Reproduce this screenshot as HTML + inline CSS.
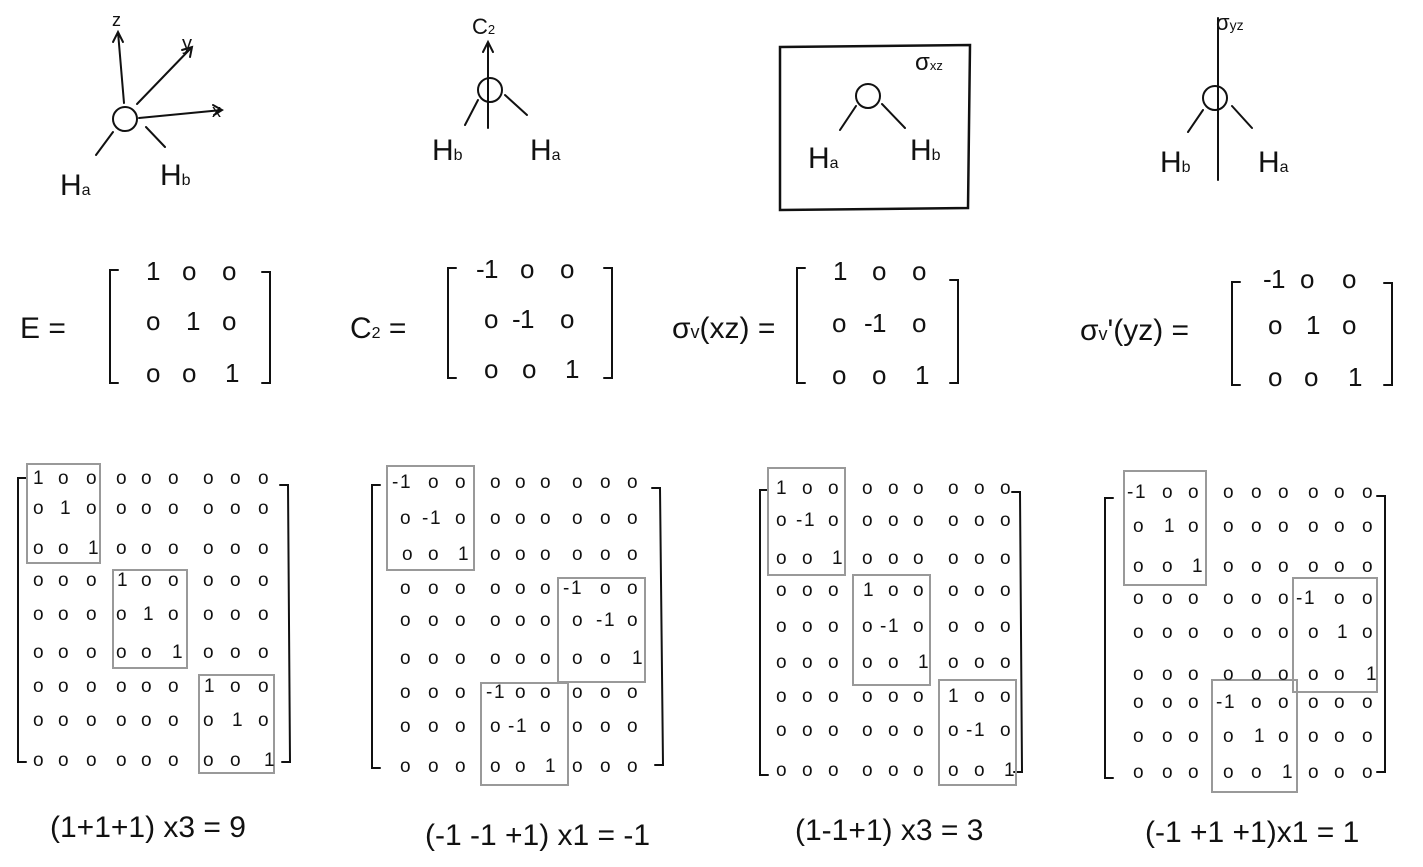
<!DOCTYPE html>
<html><head><meta charset="utf-8"><style>
html,body{margin:0;padding:0;background:#fff;}
svg{display:block}
text{font-family:"Liberation Sans",sans-serif;fill:#111}
.m{font-size:19px}
.mm{font-size:26px}
.l{font-size:30px}
.c{font-size:30px}
</style></head><body>
<svg width="1423" height="867" viewBox="0 0 1423 867" xmlns="http://www.w3.org/2000/svg">
<g fill="none" stroke="#111" stroke-width="2" stroke-linecap="round">
<circle cx="125" cy="119" r="12"/>
<path d="M124 103 L118 32 M113 42 L118 32 L123 42"/>
<path d="M137 104 L192 47 M182 50 L192 47 L190 57"/>
<path d="M139 118 L222 110 M213 105 L222 110 L214 115"/>
<path d="M113 132 L96 155 M146 127 L165 147"/>
<circle cx="490" cy="90" r="12"/>
<path d="M488 128 L488 42 M483 52 L488 42 L493 52"/>
<path d="M478 100 L465 125 M505 95 L527 115"/>
<path d="M780 47 L970 45 L968 208 L780 210 Z" stroke-width="2.5"/>
<circle cx="868" cy="96" r="12"/>
<path d="M856 106 L840 130 M882 104 L905 128"/>
<path d="M1218 18 L1218 180"/>
<circle cx="1215" cy="98" r="12"/>
<path d="M1203 110 L1188 132 M1232 106 L1252 128"/>
<path d="M118 270 L110 270 L110 383 L118 383 M262 272 L270 272 L270 383 L262 383"/>
<path d="M456 268 L448 268 L448 378 L456 378 M604 268 L612 268 L612 378 L604 378"/>
<path d="M805 268 L797 268 L797 383 L805 383 M950 280 L958 280 L958 383 L950 383"/>
<path d="M1240 282 L1232 282 L1232 385 L1240 385 M1384 283 L1392 283 L1392 385 L1384 385"/>
<path d="M26 478 L18 478 L18 762 L26 762 M280 485 L288 485 L290 762 L282 762"/>
<path d="M380 485 L372 485 L372 768 L380 768 M652 488 L660 488 L663 765 L655 765"/>
<path d="M768 490 L760 490 L760 775 L768 775 M1012 492 L1020 492 L1022 772 L1014 772"/>
<path d="M1113 498 L1105 498 L1105 778 L1113 778 M1377 496 L1385 496 L1385 772 L1377 772"/>
</g>
<g fill="none" stroke="#999" stroke-width="2">
<rect x="27" y="464" width="73" height="99"/><rect x="113" y="570" width="74" height="98"/><rect x="199" y="675" width="75" height="98"/>
<rect x="387" y="466" width="87" height="104"/><rect x="558" y="578" width="87" height="104"/><rect x="481" y="683" width="87" height="102"/>
<rect x="768" y="468" width="77" height="107"/><rect x="853" y="575" width="77" height="110"/><rect x="939" y="680" width="77" height="105"/>
<rect x="1124" y="471" width="82" height="114"/><rect x="1293" y="578" width="84" height="114"/><rect x="1212" y="680" width="85" height="112"/>
</g>
<text class="l" x="60" y="195">H<tspan font-size="16">a</tspan></text>
<text class="l" x="160" y="185">H<tspan font-size="16">b</tspan></text>
<text font-size="18" x="112" y="26">z</text><text font-size="20" x="182" y="50">y</text><text font-size="18" x="212" y="117">x</text>
<text class="l" x="432" y="160">H<tspan font-size="16">b</tspan></text>
<text class="l" x="530" y="160">H<tspan font-size="16">a</tspan></text>
<text font-size="22" x="472" y="34">C<tspan font-size="13">2</tspan></text>
<text class="l" x="808" y="168">H<tspan font-size="16">a</tspan></text>
<text class="l" x="910" y="160">H<tspan font-size="16">b</tspan></text>
<text font-size="24" x="915" y="70">σ<tspan font-size="13">xz</tspan></text>
<text class="l" x="1160" y="172">H<tspan font-size="16">b</tspan></text>
<text class="l" x="1258" y="172">H<tspan font-size="16">a</tspan></text>
<text font-size="22" x="1216" y="30">σ<tspan font-size="14">yz</tspan></text>
<text class="c" x="20" y="338">E =</text>
<text class="c" x="350" y="338">C<tspan font-size="16">2</tspan> =</text>
<text class="c" x="672" y="338">σ<tspan font-size="18">v</tspan>(xz) =</text>
<text class="c" x="1080" y="340">σ<tspan font-size="18">v</tspan>'(yz) =</text>
<text class="mm" x="146 182 222" y="280">1oo</text>
<text class="mm" x="146 186 222" y="330">o1o</text>
<text class="mm" x="146 182 225" y="382">oo1</text>
<text class="mm" x="476 484 520 560" y="278">-1oo</text>
<text class="mm" x="484 512 520 560" y="328">o-1o</text>
<text class="mm" x="484 522 565" y="378">oo1</text>
<text class="mm" x="833 872 912" y="280">1oo</text>
<text class="mm" x="832 864 872 912" y="332">o-1o</text>
<text class="mm" x="832 872 915" y="384">oo1</text>
<text class="mm" x="1263 1271 1300 1342" y="288">-1oo</text>
<text class="mm" x="1268 1306 1342" y="334">o1o</text>
<text class="mm" x="1268 1304 1348" y="386">oo1</text>
<g class="m">
<text x="33 58 86 116 141 168 203 230 258" y="484">1oooooooo</text>
<text x="33 60 86 116 141 168 203 230 258" y="514">o1ooooooo</text>
<text x="33 58 88 116 141 168 203 230 258" y="554">oo1oooooo</text>
<text x="33 58 86 117 141 168 203 230 258" y="586">ooo1ooooo</text>
<text x="33 58 86 116 143 168 203 230 258" y="620">oooo1oooo</text>
<text x="33 58 86 116 141 172 203 230 258" y="658">ooooo1ooo</text>
<text x="33 58 86 116 141 168 204 230 258" y="692">oooooo1oo</text>
<text x="33 58 86 116 141 168 203 232 258" y="726">ooooooo1o</text>
<text x="33 58 86 116 141 168 203 230 264" y="766">oooooooo1</text>
</g>
<g class="m">
<text x="392 400 428 455 490 515 540 572 600 627" y="488">-1oooooooo</text>
<text x="400 422 430 455 490 515 540 572 600 627" y="524">o-1ooooooo</text>
<text x="402 428 458 490 515 540 572 600 627" y="560">oo1oooooo</text>
<text x="400 428 455 490 515 540 563 571 600 627" y="594">oooooo-1oo</text>
<text x="400 428 455 490 515 540 572 596 604 627" y="626">ooooooo-1o</text>
<text x="400 428 455 490 515 540 572 600 632" y="664">oooooooo1</text>
<text x="400 428 455 486 494 515 540 572 600 627" y="698">ooo-1ooooo</text>
<text x="400 428 455 490 508 516 540 572 600 627" y="732">oooo-1oooo</text>
<text x="400 428 455 490 515 545 572 600 627" y="772">ooooo1ooo</text>
</g>
<g class="m">
<text x="776 802 828 862 888 913 948 974 1000" y="494">1oooooooo</text>
<text x="776 796 804 828 862 888 913 948 974 1000" y="526">o-1ooooooo</text>
<text x="776 802 832 862 888 913 948 974 1000" y="564">oo1oooooo</text>
<text x="776 802 828 863 888 913 948 974 1000" y="596">ooo1ooooo</text>
<text x="776 802 828 862 880 888 913 948 974 1000" y="632">oooo-1oooo</text>
<text x="776 802 828 862 888 918 948 974 1000" y="668">ooooo1ooo</text>
<text x="776 802 828 862 888 913 948 974 1000" y="702">oooooo1oo</text>
<text x="776 802 828 862 888 913 948 966 974 1000" y="736">ooooooo-1o</text>
<text x="776 802 828 862 888 913 948 974 1004" y="776">oooooooo1</text>
</g>
<g class="m">
<text x="1127 1135 1162 1188 1223 1251 1278 1308 1334 1362" y="498">-1oooooooo</text>
<text x="1133 1164 1188 1223 1251 1278 1308 1334 1362" y="532">o1ooooooo</text>
<text x="1133 1162 1192 1223 1251 1278 1308 1334 1362" y="572">oo1oooooo</text>
<text x="1133 1162 1188 1223 1251 1278 1296 1304 1334 1362" y="604">oooooo-1oo</text>
<text x="1133 1162 1188 1223 1251 1278 1308 1337 1362" y="638">ooooooo1o</text>
<text x="1133 1162 1188 1223 1251 1278 1308 1334 1366" y="680">oooooooo1</text>
<text x="1133 1162 1188 1216 1224 1251 1278 1308 1334 1362" y="708">ooo-1ooooo</text>
<text x="1133 1162 1188 1223 1254 1278 1308 1334 1362" y="742">oooo1oooo</text>
<text x="1133 1162 1188 1223 1251 1282 1308 1334 1362" y="778">ooooo1ooo</text>
</g>
<text class="c" x="50" y="837">(1+1+1) x3 = 9</text>
<text class="c" x="425" y="845">(-1 -1 +1) x1 = -1</text>
<text class="c" x="795" y="840">(1-1+1) x3 = 3</text>
<text class="c" x="1145" y="842">(-1 +1 +1)x1 = 1</text>
</svg>
</body></html>
